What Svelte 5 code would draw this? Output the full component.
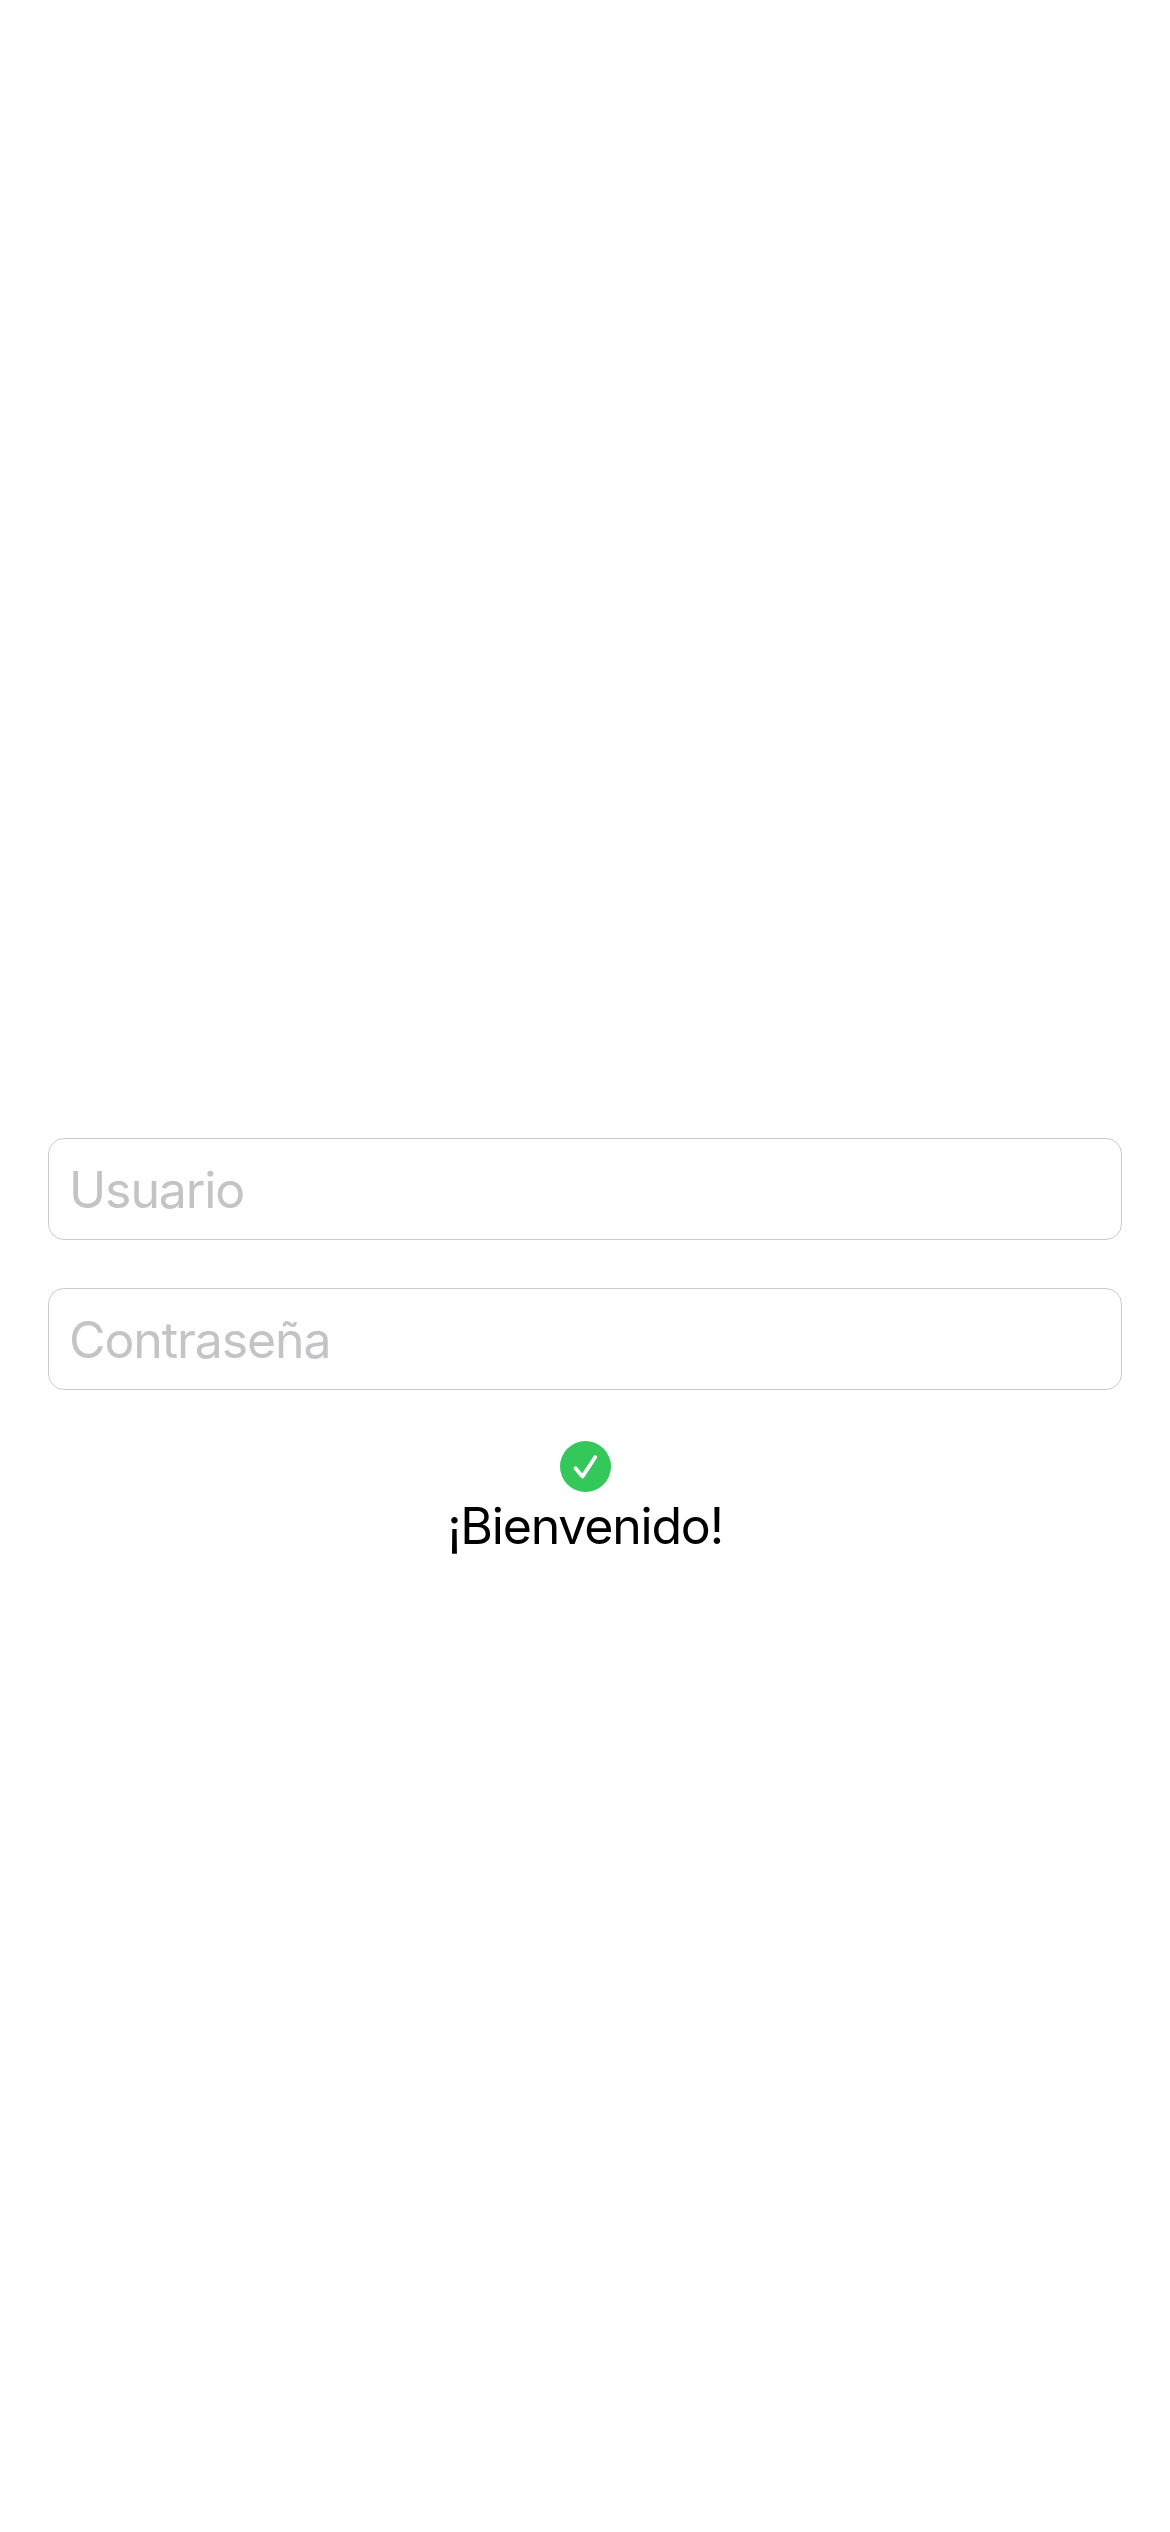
<script>
  let username = $state('');
  let password = $state('');
</script>

<main>
  <input class="field" type="text" placeholder="Usuario" aria-label="Usuario" bind:value={username} />
  <input class="field" type="password" placeholder="Contraseña" aria-label="Contraseña" bind:value={password} />
  <div class="status">
    <svg class="check" viewBox="0 0 51 51" aria-hidden="true">
      <circle cx="25.5" cy="25.5" r="25.5" fill="#34c759" />
      <path d="M15.5 27.2 L22.4 35.6 L35.2 16.2" fill="none" stroke="#fff" stroke-width="3.8" stroke-linecap="round" stroke-linejoin="round" />
    </svg>
    <p class="message">¡Bienvenido!</p>
  </div>
</main>

<style>
  :global(body) {
    background: #fff;
  }
  main {
    box-sizing: border-box;
    height: 2532px;
    padding: 1138px 48px 0;
    display: flex;
    flex-direction: column;
    gap: 48px;
    font-family: Inter, sans-serif;
  }
  .field {
    box-sizing: border-box;
    width: 100%;
    height: 102px;
    padding: 1px 20px 0;
    border: 1px solid #cbcbcc;
    border-radius: 16px;
    background: #fff;
    font: 400 50px/60px Inter, sans-serif;
    letter-spacing: -1.1px;
    outline: none;
  }
  .field::placeholder {
    color: #c4c4c6;
    opacity: 1;
  }
  .status {
    display: flex;
    flex-direction: column;
    align-items: center;
    padding-top: 3px;
  }
  .check {
    width: 51px;
    height: 51px;
    margin-left: 1px;
  }
  .message {
    margin: 4px 0 0;
    font-size: 50px;
    line-height: 60px;
    letter-spacing: -1.2px;
    color: #000;
  }
</style>
